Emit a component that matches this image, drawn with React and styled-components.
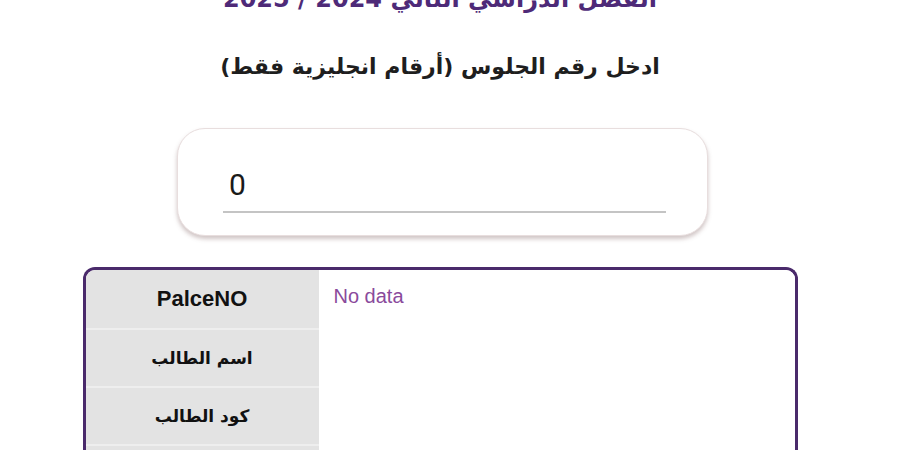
import React from "react";
import styled, { createGlobalStyle } from "styled-components";

const GlobalStyle = createGlobalStyle`
  html, body {
    margin: 0;
    padding: 0;
    background: #ffffff;
    overflow: hidden;
  }
  body {
    font-family: "Liberation Sans", "DejaVu Sans", Arial, sans-serif;
  }
`;

const Page = styled.div`
  width: 880px;
  height: 450px;
  overflow: hidden;
  display: flex;
  flex-direction: column;
  align-items: center;
  & > * {
    flex-shrink: 0;
  }
`;

const Title = styled.h1`
  margin: -17px 0 0;
  font-family: "DejaVu Sans", "Liberation Sans", sans-serif;
  font-size: 24px;
  line-height: 32px;
  font-weight: bold;
  color: #4e2a78;
  direction: rtl;
  text-align: center;
`;

const Subtitle = styled.p`
  margin: 36px 0 0;
  font-family: "DejaVu Sans", "Liberation Sans", sans-serif;
  font-size: 22px;
  line-height: 32px;
  font-weight: bold;
  color: #1e1e1e;
  direction: rtl;
  text-align: center;
`;

const InputCard = styled.div`
  margin-top: 45px;
  margin-left: 5px;
  width: 531px;
  height: 108px;
  box-sizing: border-box;
  border: 1px solid #e8dede;
  border-radius: 28px;
  box-shadow: 0 3px 4px rgba(120, 90, 90, 0.35);
  padding: 36px 41px 0 45px;
  background: #fff;
`;

const NumberInput = styled.input`
  display: block;
  width: 100%;
  box-sizing: border-box;
  border: none;
  border-bottom: 2px solid #c4c4c4;
  outline: none;
  padding: 0 0 6px 6px;
  font-family: Roboto, "Liberation Sans", sans-serif;
  font-size: 30px;
  line-height: 40px;
  color: #1a1a1a;
  background: transparent;
`;

const ResultTable = styled.div`
  margin-top: 31px;
  width: 715px;
  box-sizing: border-box;
  border: 3px solid #4a2a6b;
  border-bottom: none;
  border-radius: 12px 12px 0 0;
  display: grid;
  grid-template-columns: 233px 1fr;
  overflow: hidden;
`;

const Labels = styled.div`
  display: flex;
  flex-direction: column;
  background: #e3e3e3;
`;

const Label = styled.div`
  height: 58px;
  box-sizing: border-box;
  display: flex;
  align-items: center;
  justify-content: center;
  border-top: ${(p) => (p.$first ? "none" : "2px solid #eeeeee")};
  font-family: ${(p) =>
    p.$latin
      ? `"Liberation Sans", Arial, sans-serif`
      : `"DejaVu Sans", "Liberation Sans", sans-serif`};
  font-size: ${(p) => (p.$latin ? "22px" : "17px")};
  font-weight: bold;
  color: #111;
  direction: ${(p) => (p.$latin ? "ltr" : "rtl")};
`;

const ValueCell = styled.div`
  padding: 15px 0 0 15px;
  font-family: "Liberation Sans", Arial, sans-serif;
  font-size: 20px;
  color: #8a4a9c;
  background: #fff;
`;

const rows = [
  { label: "PalceNO", latin: true },
  { label: "اسم الطالب" },
  { label: "كود الطالب" },
  { label: "المدرسة" },
];

export default function App() {
  return (
    <>
      <GlobalStyle />
      <Page>
        <Title>الفصل الدراسي الثاني 2024 / 2025</Title>
        <Subtitle>ادخل رقم الجلوس (أرقام انجليزية فقط)</Subtitle>
        <InputCard>
          <NumberInput type="text" defaultValue="0" />
        </InputCard>
        <ResultTable>
          <Labels>
            {rows.map((r, i) => (
              <Label key={r.label} $first={i === 0} $latin={r.latin}>
                {r.label}
              </Label>
            ))}
          </Labels>
          <ValueCell>No data</ValueCell>
        </ResultTable>
      </Page>
    </>
  );
}
